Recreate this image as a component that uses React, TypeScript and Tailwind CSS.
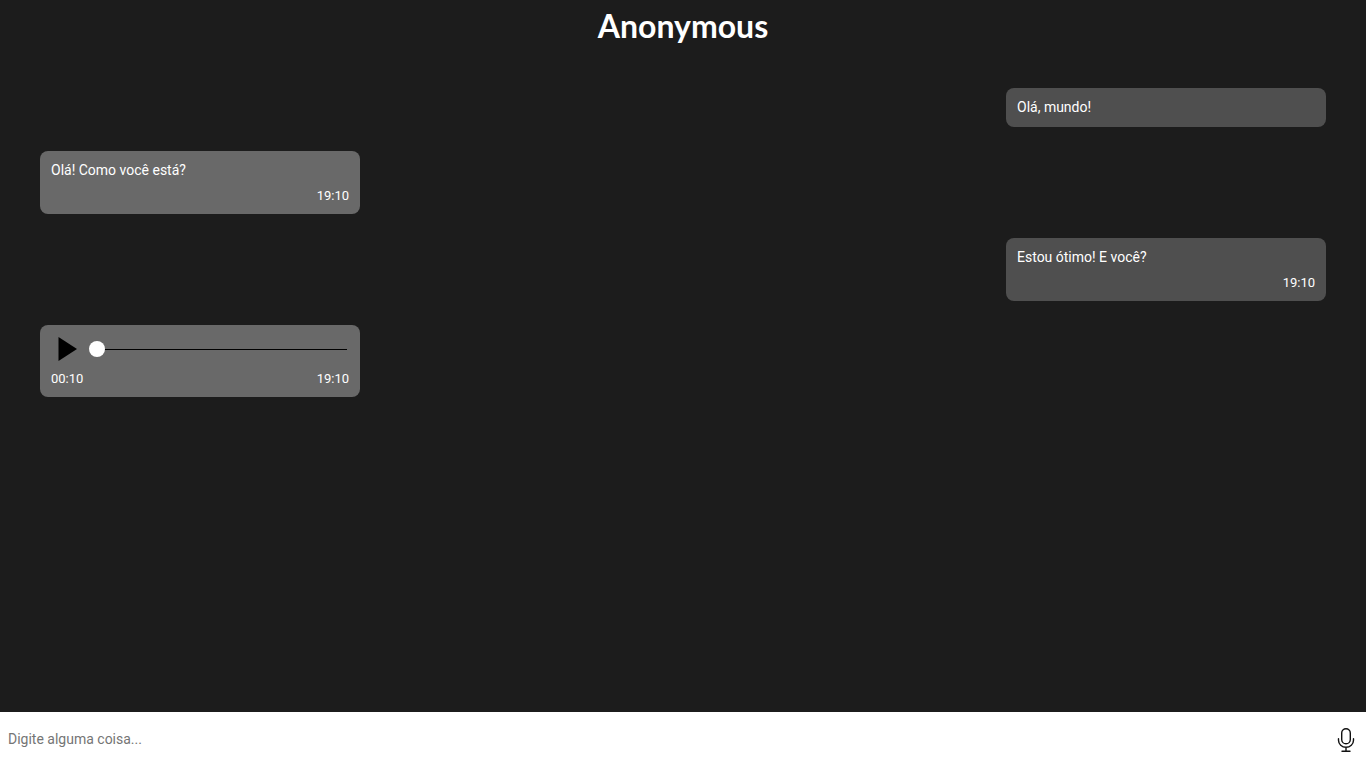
import { useState, type ReactNode } from "react";

type BubbleProps = {
  side: "left" | "right";
  children: ReactNode;
};

function Bubble({ side, children }: BubbleProps) {
  const look = side === "left" ? "self-start bg-[#696969]" : "self-end bg-[#4f4f4f]";
  return (
    <article className={`flex w-80 max-w-full flex-col gap-[9px] rounded-lg p-[11px] ${look}`}>
      {children}
    </article>
  );
}

function Text({ children }: { children: ReactNode }) {
  return <p className="text-sm leading-[17px]">{children}</p>;
}

function Time({ children }: { children: ReactNode }) {
  return <time className="ml-auto text-[13px] leading-[15px]">{children}</time>;
}

function AudioMessage() {
  const [position, setPosition] = useState(0);
  return (
    <>
      <div className="flex h-[26px] items-center gap-1">
        <button type="button" aria-label="Reproduzir" className="flex h-6 w-8 shrink-0 items-center justify-center">
          <svg width="20" height="24" viewBox="0 0 20 24" aria-hidden="true">
            <path d="M1.5 0 20 12 1.5 24Z" fill="#000" />
          </svg>
        </button>
        <input
          type="range"
          aria-label="Posição do áudio"
          min={0}
          max={10}
          value={position}
          onChange={(e) => setPosition(Number(e.target.value))}
          className="mx-0.5 h-4 min-w-0 flex-1 appearance-none bg-transparent [&::-webkit-slider-runnable-track]:h-px [&::-webkit-slider-runnable-track]:bg-black [&::-webkit-slider-thumb]:-mt-2 [&::-webkit-slider-thumb]:size-4 [&::-webkit-slider-thumb]:appearance-none [&::-webkit-slider-thumb]:rounded-full [&::-webkit-slider-thumb]:bg-white"
        />
      </div>
      <div className="flex text-[13px] leading-[15px]">
        <span>00:10</span>
        <Time>19:10</Time>
      </div>
    </>
  );
}

export default function App() {
  const [draft, setDraft] = useState("");
  return (
    <div className="flex min-h-screen flex-col bg-[#1c1c1c] font-['Roboto',sans-serif] text-white">
      <header className="flex h-12 items-center justify-center pt-1">
        <h1 className="font-['Lato',sans-serif] text-[32px] leading-10 font-bold">Anonymous</h1>
      </header>
      <main className="flex flex-1 flex-col gap-6 px-10 py-10">
        <Bubble side="right">
          <Text>Olá, mundo!</Text>
        </Bubble>
        <Bubble side="left">
          <Text>Olá! Como você está?</Text>
          <Time>19:10</Time>
        </Bubble>
        <Bubble side="right">
          <Text>Estou ótimo! E você?</Text>
          <Time>19:10</Time>
        </Bubble>
        <Bubble side="left">
          <AudioMessage />
        </Bubble>
      </main>
      <form className="flex h-14 items-center bg-white pr-2" onSubmit={(e) => e.preventDefault()}>
        <input
          type="text"
          aria-label="Mensagem"
          placeholder="Digite alguma coisa..."
          value={draft}
          onChange={(e) => setDraft(e.target.value)}
          className="h-full min-w-0 flex-1 px-2 pb-0.5 text-sm text-black outline-none placeholder:text-[#757575]"
        />
        <button type="button" aria-label="Gravar áudio" className="flex size-6 shrink-0 items-center justify-center">
          <svg width="24" height="24" viewBox="0 0 24 24" fill="none" stroke="#111" strokeWidth="1.4" strokeLinecap="round" aria-hidden="true">
            <rect x="7.7" y="0.7" width="8.6" height="15" rx="4.3" />
            <path d="M4.5 10.8v1.4a7.5 7 0 0 0 15 0v-1.4M12 19.3v4M8 23.3h8" />
          </svg>
        </button>
      </form>
    </div>
  );
}
